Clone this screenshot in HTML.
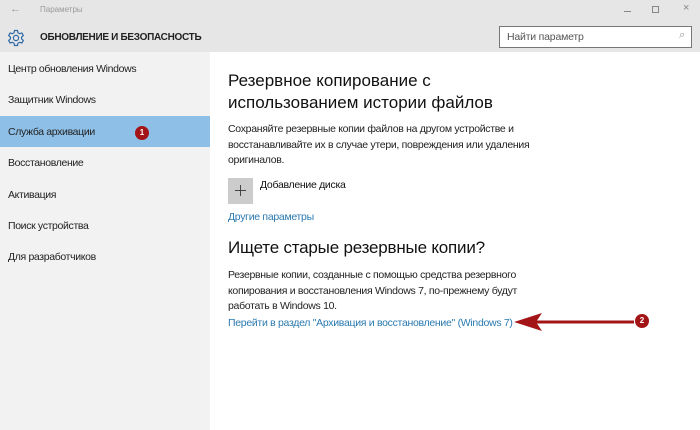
<!DOCTYPE html>
<html><head><meta charset="utf-8"><style>
*{margin:0;padding:0;box-sizing:border-box}
body{width:700px;height:430px;overflow:hidden;font-family:"Liberation Sans",sans-serif;background:#fff;position:relative;color:#111}
.a{position:absolute;white-space:nowrap}
#top{position:absolute;left:0;top:0;width:700px;height:52px;background:#e6e6e6}
#side{position:absolute;left:0;top:52px;width:210px;height:378px;background:#f2f2f2}
.it{position:absolute;left:8px;font-size:10.5px;letter-spacing:-0.35px;color:#222}
.lnk{color:#2a7ab0;font-size:10.5px;letter-spacing:-0.3px}
.p{font-size:10.5px;letter-spacing:-0.3px;line-height:15.5px;color:#222}
.badge{position:absolute;width:14px;height:14px;border-radius:50%;background:#a31417;color:#fff;font-size:8px;font-weight:bold;text-align:center;line-height:14px}
</style></head><body>
<div id="top"></div>
<div class="a" style="left:10px;top:3px;font-size:11px;color:#999">&#8592;</div>
<div class="a" style="left:40px;top:5px;font-size:8px;color:#999">Параметры</div>
<div style="position:absolute;left:624px;top:11px;width:7px;height:1px;background:#888"></div>
<div style="position:absolute;left:652px;top:6px;width:7px;height:7px;border:1px solid #888"></div>
<div class="a" style="left:683px;top:2px;font-size:11px;color:#888">×</div>
<svg class="a" style="left:7px;top:29px" width="18" height="18" viewBox="0 0 24 24" fill="none" stroke="#2f6aa8" stroke-width="1.6"><circle cx="12" cy="12" r="3.5"/><path d="M10 2h4l.6 3 2.3 1.3 2.9-1 2 3.4-2.3 2v2.6l2.3 2-2 3.4-2.9-1-2.3 1.3-.6 3h-4l-.6-3-2.3-1.3-2.9 1-2-3.4 2.3-2v-2.6l-2.3-2 2-3.4 2.9 1 2.3-1.3z"/></svg>
<div class="a" style="left:40px;top:32px;font-size:10px;letter-spacing:-0.3px;font-weight:bold;color:#222">ОБНОВЛЕНИЕ И БЕЗОПАСНОСТЬ</div>
<div style="position:absolute;left:499px;top:26px;width:193px;height:22px;border:1px solid #777;background:#fff"></div>
<div class="a" style="left:507px;top:31px;font-size:10.5px;letter-spacing:-0.2px;color:#555">Найти параметр</div>
<div class="a" style="left:679px;top:29px;font-size:11px;color:#999">&#8981;</div>
<div id="side"></div>
<div style="position:absolute;left:0;top:116px;width:210px;height:31px;background:#8ebfe6"></div>
<div class="it" style="top:63px">Центр обновления Windows</div>
<div class="it" style="top:94px">Защитник Windows</div>
<div class="it" style="top:126px">Служба архивации</div>
<div class="badge" style="left:135px;top:126px">1</div>
<div class="it" style="top:157px">Восстановление</div>
<div class="it" style="top:189px">Активация</div>
<div class="it" style="top:220px">Поиск устройства</div>
<div class="it" style="top:251px">Для разработчиков</div>
<div class="a" style="left:228px;top:70px;font-size:17px;line-height:22px;color:#111">Резервное копирование с<br>использованием истории файлов</div>
<div class="a p" style="left:228px;top:122px">Сохраняйте резервные копии файлов на другом устройстве и<br>восстанавливайте их в случае утери, повреждения или удаления<br>оригиналов.</div>
<div style="position:absolute;left:228px;top:178px;width:25px;height:26px;background:#ccc"></div>
<div style="position:absolute;left:235px;top:190px;width:11px;height:1px;background:#444"></div>
<div style="position:absolute;left:240px;top:185px;width:1px;height:11px;background:#444"></div>
<div class="a" style="left:260px;top:179px;font-size:10.5px;letter-spacing:-0.3px">Добавление диска</div>
<div class="a lnk" style="left:228px;top:211px">Другие параметры</div>
<div class="a" style="left:228px;top:238px;font-size:17px;letter-spacing:-0.2px;color:#111">Ищете старые резервные копии?</div>
<div class="a p" style="left:228px;top:268px">Резервные копии, созданные с помощью средства резервного<br>копирования и восстановления Windows 7, по-прежнему будут<br>работать в Windows 10.</div>
<div class="a lnk" style="left:228px;top:317px">Перейти в раздел "Архивация и восстановление" (Windows 7)</div>
<svg class="a" style="left:512px;top:311px" width="125" height="24"><path d="M2 11 L30 2 L25 9.5 L122 9.5 L122 12.5 L25 12.5 L30 20 Z" fill="#a31417"/></svg>
<div class="badge" style="left:635px;top:314px">2</div>
</body></html>
